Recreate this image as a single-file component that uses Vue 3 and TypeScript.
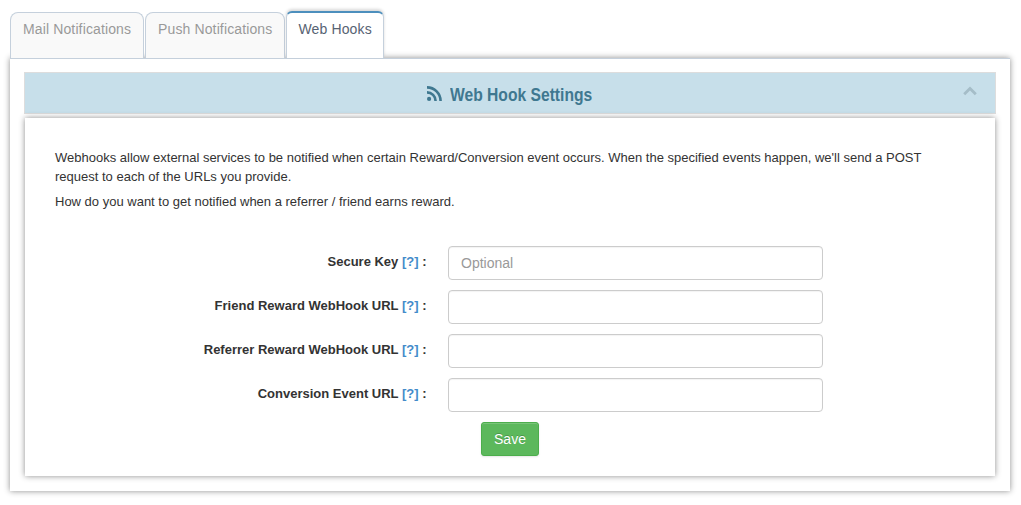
<script setup lang="ts">
interface Tab { label: string; cls: string }
interface Field { id: string; label: string; placeholder: string }

const tabs: Tab[] = [
  { label: 'Mail Notifications', cls: 'mail' },
  { label: 'Push Notifications', cls: 'push' },
  { label: 'Web Hooks', cls: 'active' },
]
const fields: Field[] = [
  { id: 'key', label: 'Secure Key', placeholder: 'Optional' },
  { id: 'friend', label: 'Friend Reward WebHook URL', placeholder: '' },
  { id: 'referrer', label: 'Referrer Reward WebHook URL', placeholder: '' },
  { id: 'conversion', label: 'Conversion Event URL', placeholder: '' },
]
</script>

<template>
  <main class="page">
    <nav class="tabs">
      <a v-for="t in tabs" :key="t.label" class="tab" :class="t.cls"><span>{{ t.label }}</span></a>
    </nav>
    <section class="panel">
      <header class="head">
        <svg class="rss" viewBox="0 0 15 15" width="15" height="15">
          <circle cx="2.1" cy="12.9" r="2.1" fill="#3f7890" />
          <path d="M0 6.4A8.6 8.6 0 0 1 8.6 15M0 1.4A13.6 13.6 0 0 1 13.6 15" fill="none" stroke="#3f7890" stroke-width="2.6" />
        </svg>
        <h4 class="title"><span>Web Hook Settings</span></h4>
        <svg class="chevron" viewBox="0 0 14 10" width="14" height="10">
          <path d="M1.2 8.2L7 2.4L12.8 8.2" fill="none" stroke="#a5bdc8" stroke-width="2.8" />
        </svg>
      </header>
      <div class="body">
        <p>Webhooks allow external services to be notified when certain Reward/Conversion event occurs. When the specified events happen, we'll send a POST<br>request to each of the URLs you provide.</p>
        <p class="second">How do you want to get notified when a referrer / friend earns reward.</p>
        <form class="form" @submit.prevent>
          <div v-for="f in fields" :key="f.id" class="row">
            <label :for="f.id">{{ f.label }} <a>[?]</a> :</label>
            <input :id="f.id" type="text" :placeholder="f.placeholder">
          </div>
          <button type="submit">Save</button>
        </form>
      </div>
    </section>
  </main>
</template>

<style>
body { margin: 0; background: #fff; }
</style>

<style scoped>
* { box-sizing: border-box; }
.page {
  height: 505px;
  padding: 11px 11px 0 10px;
  overflow: hidden;
  font-family: "Liberation Sans", Arial, sans-serif;
  font-size: 13px;
  color: #333;
}
.tabs { position: relative; z-index: 1; display: flex; align-items: flex-end; height: 47px; }
.tab {
  height: 46px;
  margin-right: 1px;
  padding: 6px 0 0 12px;
  border: 1px solid #c5d0dc;
  border-bottom: 0;
  border-radius: 8px 8px 0 0;
  background: #f9f9f9;
  color: #999;
  font-size: 14px;
  line-height: 20px;
  letter-spacing: .13px;
  white-space: nowrap;
}
.mail { width: 134px; }
.push { width: 140px; }
.active {
  width: 98px;
  height: 47px;
  padding-left: 11.5px;
  border-top: 2px solid #4c8fbd;
  border-radius: 6px 6px 0 0;
  background: #fff;
  color: #576373;
  box-shadow: 0 -2px 3px rgba(0, 0, 0, .15);
}
.panel {
  height: 433px;
  padding: 13px 14px 0;
  border-top: 1px solid #c5d0dc;
  background: #fff;
  box-shadow: 0 0 6px rgba(0, 0, 0, .45);
}
.head {
  display: flex;
  height: 42px;
  padding: 13px 0 0 402px;
  border: 1px solid #ddd;
  background: #c7dfea;
}
.rss { flex: none; }
.title {
  width: 142px;
  margin: -2.5px 0 0 8px;
  font-size: 19px;
  line-height: 22px;
  color: #3f7890;
  white-space: nowrap;
}
.title span { display: inline-block; transform: scaleX(.823); transform-origin: 0 0; }
.chevron { margin: 0 0 0 370.5px; flex: none; }
.body {
  height: 358px;
  margin: 4px 1px 0;
  padding: 30px 30px 0;
  background: #fff;
  box-shadow: 0 0 6px rgba(0, 0, 0, .45);
}
p { margin: 0; line-height: 19px; white-space: nowrap; }
.second { margin-top: 6px; }
.form { padding-top: 35px; }
.row { display: flex; height: 44px; }
label { width: 371.5px; padding-top: 6px; text-align: right; font-weight: bold; line-height: 19px; white-space: nowrap; }
label a { color: #428bca; }
input {
  width: 375px;
  height: 34px;
  margin-left: 21.5px;
  padding: 6px 12px;
  border: 1px solid #ccc;
  border-radius: 4px;
  background: #fff;
  box-shadow: inset 0 1px 1px rgba(0, 0, 0, .05);
  font: 14px "Liberation Sans", Arial, sans-serif;
}
input::placeholder { color: #999; opacity: 1; }
button {
  display: block;
  width: 58px;
  height: 34px;
  margin-left: 426px;
  padding: 0;
  border: 1px solid #4cae4c;
  border-radius: 3px;
  background: #5cb85c;
  box-shadow: inset 0 1px 0 rgba(255, 255, 255, .18), 0 1px 2px rgba(0, 0, 0, .1);
  color: #fff;
  font: 14px "Liberation Sans", Arial, sans-serif;
  text-shadow: 0 -1px 0 rgba(0, 0, 0, .2);
}
</style>
